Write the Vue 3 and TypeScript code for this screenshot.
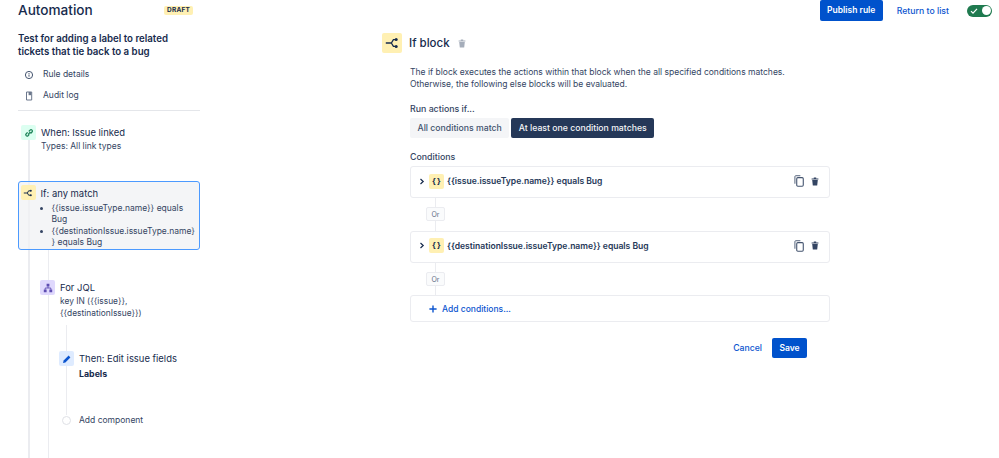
<script setup lang="ts">
const conditions: string[] = ['{{issue.issueType.name}} equals Bug', '{{destinationIssue.issueType.name}} equals Bug']
</script>

<template>
  <div class="page">
    <aside class="side">
      <div class="line l1"></div>
      <div class="line l2"></div>
      <div class="line l3"></div>
      <div class="head"><h1>Automation</h1><span class="draft">DRAFT</span></div>
      <h2>Test for adding a label to related tickets that tie back to a bug</h2>
      <div class="nav n1">
        <svg width="10" height="10" viewBox="0 0 10 10"><circle cx="5" cy="5" r="3.6" fill="none" stroke="#44546f" stroke-width="1"/><path d="M5 4.5v2.2M5 3v.9" stroke="#44546f" stroke-width="1"/></svg>
        <span>Rule details</span>
      </div>
      <div class="nav n2">
        <svg width="10" height="10" viewBox="0 0 10 10"><path d="M2.5 1h5.2v8H2.5z" fill="none" stroke="#6b778c" stroke-width="1"/><path d="M4.6 1v3.2h2.6V1z" fill="#6b778c"/></svg>
        <span>Audit log</span>
      </div>
      <div class="divider"></div>

      <div class="step when">
        <span class="ico green">
          <svg width="10" height="10" viewBox="0 0 10 10"><path d="M4.2 6.4 6.4 4M3.6 4.4 2.2 5.8a1.2 1.2 0 0 0 1.8 1.9l1.3-1.3M4.8 3.4l1.3-1.3A1.2 1.2 0 0 1 8 4L6.5 5.5" fill="none" stroke="#1f845a" stroke-width="1.3"/></svg>
        </span>
        <div><div class="t">When: Issue linked</div><div class="s">Types: All link types</div></div>
      </div>

      <div class="step card">
        <span class="ico yellow">
          <svg width="10" height="10" viewBox="0 0 10 10"><path d="M.8 5h3.6M7.4 2.8H5.6L4.4 5l1.2 2.2h1.8" fill="none" stroke="#172b4d" stroke-width="1"/><circle cx="7.8" cy="2.8" r="1" fill="#172b4d"/><circle cx="7.8" cy="7.2" r="1" fill="#172b4d"/></svg>
        </span>
        <div class="cbody">
          <div class="t">If: any match</div>
          <ul>
            <li>{{ conditions[0] }}</li>
            <li>{{ conditions[1] }}</li>
          </ul>
        </div>
      </div>

      <div class="step jql">
        <span class="ico purple">
          <svg width="10" height="10" viewBox="0 0 10 10"><path d="M3.6.8h2.8v2.6H3.6zM.8 6.6h2.8v2.6H.8zM6.4 6.6h2.8v2.6H6.4z" fill="#5e4db2"/><path d="M5 3.4v1.6M2.2 6.6V5h5.6v1.6" fill="none" stroke="#5e4db2" stroke-width=".9"/></svg>
        </span>
        <div><div class="t">For JQL</div><div class="s q">key IN ({{ '{{' }}issue}},<br>{{ '{{' }}destinationIssue}})</div></div>
      </div>

      <div class="step then">
        <span class="ico blue">
          <svg width="10" height="10" viewBox="0 0 10 10"><path d="M1 9l.6-2.4L6.6 1.6l1.8 1.8-5 5z" fill="#0c55cf"/></svg>
        </span>
        <div><div class="t">Then: Edit issue fields</div><div class="s b">Labels</div></div>
      </div>

      <div class="add"><span class="dot"></span><span>Add component</span></div>
    </aside>

    <main class="main">
      <div class="top">
        <button class="primary pub">Publish rule</button>
        <a class="link ret">Return to list</a>
        <span class="toggle">
          <svg width="8" height="8" viewBox="0 0 8 8"><path d="M1 4.2 3 6.2 7 1.8" fill="none" stroke="#fff" stroke-width="1.2"/></svg>
          <i></i>
        </span>
      </div>

      <div class="title">
        <span class="bigico">
          <svg width="14" height="12" viewBox="0 0 14 12"><path d="M.8 6h5.2M10.6 2.6H8.4L6.4 6l2 3.4h2.2" fill="none" stroke="#172b4d" stroke-width="1.3"/><circle cx="11.2" cy="2.6" r="1.5" fill="#172b4d"/><circle cx="11.2" cy="9.4" r="1.5" fill="#172b4d"/></svg>
        </span>
        <h3>If block</h3>
        <svg class="trash-g" width="8" height="9" viewBox="0 0 8 9"><path d="M.6 1.6h6.8v1H.6zM2.8.4h2.4v1H2.8zM1.2 3h5.6l-.6 5.6H1.8z" fill="#a5adba"/></svg>
      </div>

      <div class="content">
        <p class="desc">The if block executes the actions within that block when the all specified conditions matches.<br>Otherwise, the following else blocks will be evaluated.</p>
        <div class="label run">Run actions if...</div>
        <div class="seg">
          <span class="opt">All conditions match</span>
          <span class="opt on">At least one condition matches</span>
        </div>
        <div class="label cond">Conditions</div>

        <template v-for="c in conditions" :key="c">
          <div class="row">
            <svg class="chev" width="6" height="7" viewBox="0 0 6 7"><path d="M1.5 1 4.2 3.5 1.5 6" fill="none" stroke="#172b4d" stroke-width="1.2"/></svg>
            <span class="brace">{&thinsp;}</span>
            <span class="ctext">{{ c }}</span>
            <svg class="copy" width="10" height="12" viewBox="0 0 11 13"><path d="M1 9.5V1.6C1 1 1.4.7 2 .7h5" fill="none" stroke="#44546f" stroke-width="1"/><rect x="3" y="2.8" width="7.2" height="9.4" rx="1.2" fill="none" stroke="#44546f" stroke-width="1.2"/></svg>
            <svg class="trash" width="8" height="9" viewBox="0 0 8 9"><path d="M.6 1.6h6.8v1H.6zM2.8.4h2.4v1H2.8zM1.2 3h5.6l-.6 5.6H1.8z" fill="#344563"/></svg>
          </div>
          <div class="or"><span>Or</span></div>
        </template>

        <div class="row addrow">
          <svg width="8" height="8" viewBox="0 0 8 8"><path d="M4 .4v7.2M.4 4h7.2" stroke="#0c55cf" stroke-width="1.4"/></svg>
          <span>Add conditions...</span>
        </div>

        <div class="actions">
          <a class="link">Cancel</a>
          <button class="primary save">Save</button>
        </div>
      </div>
    </main>
  </div>
</template>

<style>
html, body { margin: 0; background: #fff; overflow: hidden; }
</style>

<style scoped>
.page { width: 999px; height: 458px; display: flex; overflow: hidden; font-family: Inter, "Liberation Sans", sans-serif; color: #172b4d; background: #fff; }
.side { position: relative; width: 182px; flex: none; padding: 0 0 0 18px; font-size: 8.5px; line-height: 11.5px; color: #344563; }
.line { position: absolute; width: 1.5px; background: #ebecf0; }
.l1 { left: 28px; top: 140px; bottom: 0; }
.l2 { left: 47.5px; top: 250px; bottom: 0; }
.l3 { left: 65.5px; top: 325px; height: 90px; }
.head { display: flex; align-items: center; justify-content: space-between; height: 21px; padding-right: 7px; }
h1 { margin: 0; font-size: 13.6px; font-weight: 500; color: #172b4d; }
.draft { background: #fff0b3; color: #172b4d; font-size: 6.5px; font-weight: 700; line-height: 9px; padding: 0 3px; border-radius: 2px; letter-spacing: .2px; }
h2 { margin: 12px 0 0; font-size: 9.7px; line-height: 12.5px; font-weight: 600; color: #172b4d; width: 170px; }
.nav { display: flex; align-items: center; gap: 9px; margin-left: 6px; height: 12px; color: #344563; }
.n1 { margin-top: 11px; }
.n2 { margin-top: 9px; }
.divider { height: 1px; background: #e4e6ea; margin-top: 8px; }
.step { position: relative; display: flex; gap: 5px; }
.ico { width: 15px; height: 15px; flex: none; border-radius: 2px; display: flex; align-items: center; justify-content: center; }
.green { background: #dcfff1; }
.yellow { background: #fff0b3; }
.purple { background: #dfd8fd; }
.blue { background: #deebff; }
.t { font-size: 9.45px; line-height: 12px; color: #172b4d; margin-top: 2px; }
.s { font-size: 8.5px; line-height: 11.5px; margin-top: 2px; color: #344563; }
.s.q { font-size: 8.4px; }
.s.b { font-size: 8.8px; font-weight: 700; color: #172b4d; margin-top: 3px; }
.when { margin: 14px 0 0 3px; }
.card { margin-top: 28px; box-sizing: border-box; height: 69.5px; padding: 3.5px 0 0 1.5px; background: rgba(240, 241, 244, .75); border: 1.5px solid #4c9aff; border-radius: 3px; width: 182px; margin-left: 0; }
.cbody { min-width: 0; width: 155.5px; }
.card .t { margin-top: 2.5px; }
ul { margin: 3.5px 0 0; padding: 0 0 0 11px; }
li { font-size: 8.5px; line-height: 11.2px; overflow-wrap: anywhere; }
li + li { margin-top: 0.5px; }
.jql { margin: 30px 0 0 22px; }
.then { margin: 32px 0 0 41px; }
.add { position: relative; display: flex; align-items: center; gap: 8px; margin: 35px 0 0 44px; }
.dot { width: 7px; height: 7px; border: 1px solid #dfe1e6; border-radius: 50%; background: #fff; }
.main { flex: 1; padding-left: 182px; padding-right: 7px; min-width: 0; }
.top { display: flex; align-items: center; justify-content: flex-end; height: 21px; }
button { border: 0; border-radius: 2px; background: #0052cc; color: #fff; font-family: inherit; font-weight: 600; font-size: 8.5px; padding: 0; }
.pub { width: 63px; height: 21px; margin-top: -1px; }
.link { color: #0c55cf; font-size: 8.7px; font-weight: 500; }
.ret { margin-left: 14px; }
.toggle { position: relative; width: 25px; height: 12px; background: #1f7a4f; border-radius: 6px; margin-left: 18px; display: flex; align-items: center; padding-left: 3px; box-sizing: border-box; }
.toggle i { position: absolute; right: 1.5px; top: 1.5px; width: 9px; height: 9px; background: #fff; border-radius: 50%; }
.title { display: flex; align-items: center; margin-top: 12px; height: 20px; }
.bigico { width: 20px; height: 20px; background: #fff0b3; border-radius: 2px; display: flex; align-items: center; justify-content: center; }
h3 { margin: 0 0 0 7px; font-size: 11.5px; font-weight: 500; color: #172b4d; }
.trash-g { margin-left: 8px; }
.content { width: 420px; margin-left: 28px; font-size: 8.7px; color: #344563; }
.desc { margin: 12.5px 0 0; line-height: 12.5px; font-size: 8.52px; color: #344563; }
.label { font-size: 8.8px; line-height: 12px; font-weight: 500; color: #344563; }
.run { margin-top: 12.5px; }
.seg { display: flex; gap: 2px; margin-top: 3px; }
.opt { height: 20px; line-height: 20px; padding: 0 7.5px; background: #f4f5f7; border-radius: 2px; font-weight: 500; color: #42526e; }
.on { background: #253858; color: #f4f5f7; }
.cond { margin-top: 13px; }
.row { display: flex; align-items: center; box-sizing: border-box; height: 32px; border: 1px solid #ebecf0; border-radius: 3px; padding: 0 10px 2px 8px; margin-top: 3px; background: #fff; }
.chev { margin-right: 4px; }
.brace { width: 15px; height: 15px; background: #fff0b3; border-radius: 2px; text-align: center; font-size: 8px; line-height: 15px; font-weight: 700; color: #172b4d; margin-right: 3px; }
.ctext { font-weight: 600; font-size: 8.55px; color: #253858; flex: 1; }
.copy { margin-right: 7px; }
.or { position: relative; height: 32.5px; display: flex; align-items: center; margin: 0 0 -3px 16px; }
.or::before { content: ""; position: absolute; left: 9px; top: 0; bottom: 0; width: 1px; background: #ebecf0; }
.or span { position: relative; width: 19px; height: 14px; line-height: 13px; text-align: center; font-size: 7px; background: #fafbfc; border: 1px solid #ebecf0; border-radius: 2px; box-sizing: border-box; color: #5e6c84; }
.addrow { height: 27px; padding-left: 18px; gap: 5px; color: #0c55cf; font-weight: 500; padding-bottom: 0; font-size: 8.5px; }
.actions { display: flex; justify-content: flex-end; align-items: center; gap: 10px; margin: 15.5px 23px 0 0; }
.save { width: 35px; height: 20px; }
</style>
